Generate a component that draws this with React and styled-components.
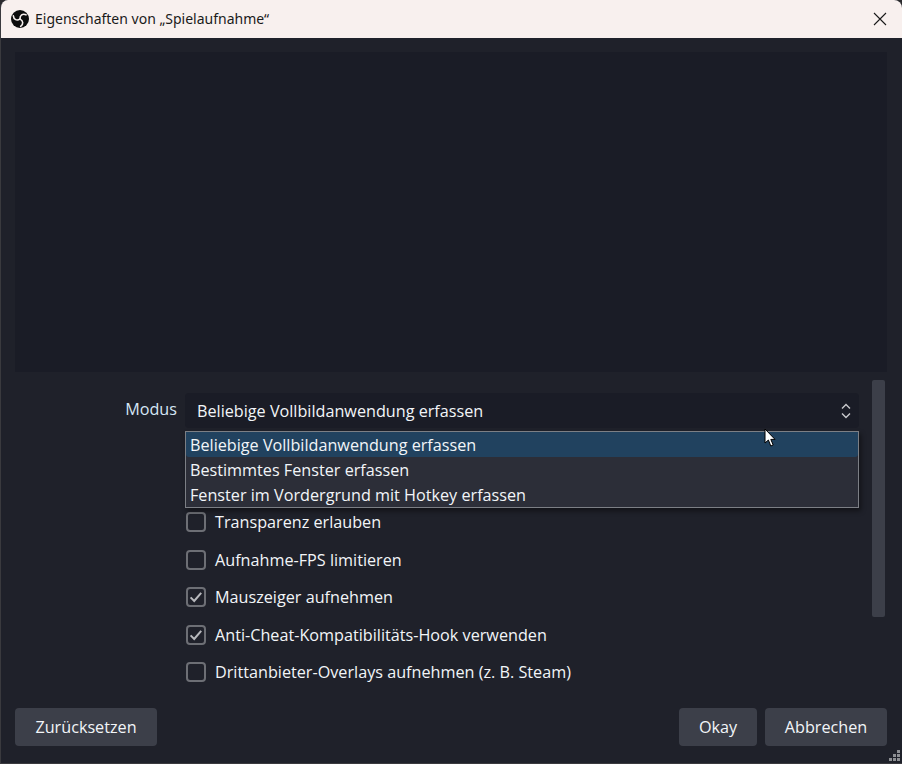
import React from 'react';
import styled, { createGlobalStyle } from 'styled-components';

const GlobalStyle = createGlobalStyle`
  html, body {
    margin: 0;
    padding: 0;
    background: #2b2b2e;
    overflow: hidden;
  }
  * { box-sizing: border-box; }
`;

const Window = styled.div`
  position: relative;
  width: 902px;
  height: 764px;
  display: flex;
  flex-direction: column;
  background: #1f212a;
  border-radius: 8px 8px 0 0;
  border-left: 1px solid #3a3a3e;
  border-bottom: 1px solid #3a3a3e;
  overflow: hidden;
  font-family: "Open Sans", "Noto Sans", sans-serif;
  font-size: 16.2px;
  color: #f2f5f8;
`;

const TitleBar = styled.div`
  height: 38px;
  flex: none;
  display: flex;
  align-items: center;
  padding: 0 12px 1px 10px;
  background: #f8f0ee;
  color: #1a1a1a;
  font-family: "Noto Sans", "Open Sans", sans-serif;
  font-size: 14px;
`;

const TitleText = styled.span`
  margin-left: 6px;
  flex: 1;
`;

const CloseButton = styled.button`
  width: 14px;
  height: 14px;
  padding: 0;
  margin-right: 3px;
  border: 0;
  background: none;
  display: flex;
`;

const Body = styled.div`
  flex: 1;
  display: flex;
  flex-direction: column;
  padding: 14px 15px 17px 14px;
  min-height: 0;
`;

const Preview = styled.div`
  height: 320px;
  flex: none;
  background: #1a1c26;
`;

const FormArea = styled.div`
  height: 310px;
  flex: none;
  margin-top: 8px;
  display: flex;
  overflow: hidden;
`;

const Form = styled.div`
  width: 857px;
  flex: none;
  padding-top: 13px;
  display: grid;
  grid-template-columns: 162px 1fr;
  grid-auto-rows: min-content;
  column-gap: 8px;
`;

const FieldLabel = styled.label`
  text-align: right;
  line-height: 32px;
  color: #d5e6f5;
`;

const ComboWrap = styled.div`
  position: relative;
  width: 674px;
  margin-bottom: 75.5px;
`;

const Combo = styled.div`
  height: 35px;
  display: flex;
  align-items: center;
  justify-content: space-between;
  padding: 0 6px 0 12px;
  border-radius: 4px;
  background: #1a1c26;
`;

const ComboArrows = styled.svg`
  width: 14px;
  height: 18px;
`;

const Menu = styled.ul`
  position: absolute;
  top: 38px;
  left: 0;
  width: 674px;
  height: 77px;
  margin: 0;
  padding: 0;
  list-style: none;
  background: #2c2e38;
  border: 1px solid #7c7f85;
  box-shadow: 2px 3px 5px rgba(0, 0, 0, 0.45);
  z-index: 2;
`;

const MenuItem = styled.li`
  height: 25px;
  line-height: 27px;
  padding-left: 4px;
  background: ${p => (p.$active ? '#21425f' : 'transparent')};
  border-radius: ${p => (p.$active ? '0 0 3px 3px' : '0')};
`;

const CheckRow = styled.div`
  grid-column: 2;
  height: 37.5px;
  display: flex;
  align-items: center;
  gap: 9px;
  padding-left: 1px;
`;

const CheckBox = styled.span`
  width: 20px;
  height: 20px;
  flex: none;
  display: flex;
  align-items: center;
  justify-content: center;
  border: 2px solid #6d6f75;
  border-radius: 4px;
  background: #1f212a;
`;

const ScrollTrack = styled.div`
  width: 13px;
  flex: none;
  display: flex;
`;

const ScrollThumb = styled.div`
  width: 13px;
  height: 237px;
  background: #3c3f49;
  border-radius: 2px;
`;

const Footer = styled.div`
  flex: none;
  margin-top: 18px;
  display: flex;
  align-items: center;
  gap: 8px;
`;

const Spacer = styled.div`
  flex: 1;
`;

const Button = styled.button`
  height: 38px;
  width: ${p => p.$width}px;
  padding: 0;
  border: 0;
  border-radius: 4px;
  background: #3c3f49;
  color: #f2f5f8;
  font: inherit;
`;

const Cursor = styled.svg`
  position: absolute;
  left: 763px;
  top: 428px;
  z-index: 3;
`;

const Grip = styled.svg`
  position: absolute;
  right: 2px;
  bottom: 2px;
`;

const options = [
  'Beliebige Vollbildanwendung erfassen',
  'Bestimmtes Fenster erfassen',
  'Fenster im Vordergrund mit Hotkey erfassen',
];

const checks = [
  { label: 'Transparenz erlauben', checked: false },
  { label: 'Aufnahme-FPS limitieren', checked: false },
  { label: 'Mauszeiger aufnehmen', checked: true },
  { label: 'Anti-Cheat-Kompatibilitäts-Hook verwenden', checked: true },
  { label: 'Drittanbieter-Overlays aufnehmen (z. B. Steam)', checked: false },
];

const ObsLogo = () => (
  <svg width="18" height="18" viewBox="0 0 18 18">
    <circle cx="9" cy="9" r="9" fill="#0c0c0c" />
    {[0, 120, 240].map(a => (
      <path
        key={a}
        d="M9 8.8 C8.8 5.4 11.6 3.2 15 4.8"
        stroke="#f8f0ee"
        strokeWidth="1.6"
        strokeLinecap="round"
        fill="none"
        transform={`rotate(${a} 9 9)`}
      />
    ))}
  </svg>
);

const App = () => {
  return (
    <Window>
      <GlobalStyle />
      <TitleBar>
        <ObsLogo />
        <TitleText>Eigenschaften von „Spielaufnahme“</TitleText>
        <CloseButton aria-label="Schließen">
          <svg width="14" height="14" viewBox="0 0 14 14">
            <path d="M1 1 L13 13 M13 1 L1 13" stroke="#1a1a1a" strokeWidth="1.1" fill="none" />
          </svg>
        </CloseButton>
      </TitleBar>
      <Body>
        <Preview />
        <FormArea>
          <Form>
            <FieldLabel>Modus</FieldLabel>
            <ComboWrap>
              <Combo>
                Beliebige Vollbildanwendung erfassen
                <ComboArrows viewBox="0 0 14 18">
                  <path d="M3 6.5 L7 2.5 L11 6.5 M3 11.5 L7 15.5 L11 11.5" stroke="#c9cacd" strokeWidth="1.4" fill="none" />
                </ComboArrows>
              </Combo>
              <Menu>
                {options.map((o, i) => (
                  <MenuItem key={o} $active={i === 0}>{o}</MenuItem>
                ))}
              </Menu>
            </ComboWrap>
            {checks.map(c => (
              <CheckRow key={c.label}>
                <CheckBox>
                  {c.checked && (
                    <svg width="14" height="14" viewBox="0 0 14 14">
                      <path d="M1.6 7.4 L5.2 11 L12.2 2.8" stroke="#b8b9bd" strokeWidth="2" fill="none" />
                    </svg>
                  )}
                </CheckBox>
                {c.label}
              </CheckRow>
            ))}
          </Form>
          <ScrollTrack>
            <ScrollThumb />
          </ScrollTrack>
        </FormArea>
        <Footer>
          <Button $width={142}>Zurücksetzen</Button>
          <Spacer />
          <Button $width={78}>Okay</Button>
          <Button $width={122}>Abbrechen</Button>
        </Footer>
      </Body>
      <Cursor width="14" height="20" viewBox="0 0 14 20">
        <path d="M1 1 L1 15 L4.4 12 L6.8 18 L9.2 17 L6.8 11.4 L11 11.4 Z" fill="#fff" stroke="#000" strokeWidth="1" />
      </Cursor>
      <Grip width="11" height="11" viewBox="0 0 11 11" fill="#8d8f93">
        <rect x="8" y="0" width="3" height="3" />
        <rect x="4" y="4" width="3" height="3" />
        <rect x="8" y="4" width="3" height="3" />
        <rect x="0" y="8" width="3" height="3" />
        <rect x="4" y="8" width="3" height="3" />
        <rect x="8" y="8" width="3" height="3" />
      </Grip>
    </Window>
  );
};

export default App;
